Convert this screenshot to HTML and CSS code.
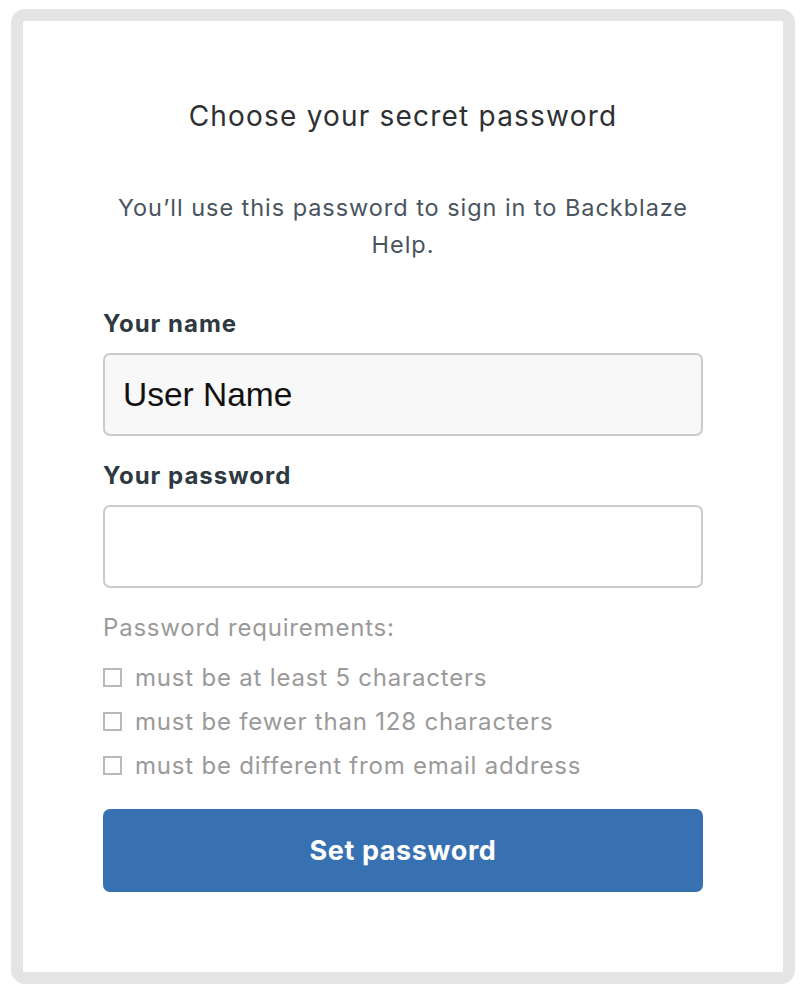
FILE: index.html
```html
<!DOCTYPE html>
<html lang="en">
<head>
  <meta charset="UTF-8" />
  <meta name="viewport" content="width=device-width, initial-scale=1.0" />
  <title>Choose your secret password</title>
  <link rel="stylesheet" href="styles.css">
</head>
<body>
  <div class="frame">
    <form class="card" onsubmit="return false">
      <h1>Choose your secret password</h1>
      <p class="intro">You’ll use this password to sign in to Backblaze Help.</p>

      <label class="field-label" for="name">Your name</label>
      <input class="field filled" id="name" type="text" value="User Name">

      <label class="field-label" for="password">Your password</label>
      <input class="field" id="password" type="password">

      <div class="reqs">
        <p class="reqs-title">Password requirements:</p>
        <ul>
          <li><span class="box"></span>must be at least 5 characters</li>
          <li><span class="box"></span>must be fewer than 128 characters</li>
          <li><span class="box"></span>must be different from email address</li>
        </ul>
      </div>

      <button type="submit">Set password</button>
    </form>
  </div>
</body>
</html>
```

FILE: styles.css
```css
html, body {
  margin: 0;
  padding: 0;
  background: #fff;
  font-family: Inter, 'Noto Sans', sans-serif;
}
.frame {
  margin: 9px 10px 0 11px;
  width: 760px;
  height: 951px;
  border: 12px solid #e4e4e4;
  border-radius: 14px;
  background: #fff;
}
.card {
  padding: 78px 80px 0;
  display: flex;
  flex-direction: column;
}
h1 {
  margin: 0;
  text-align: center;
  font-size: 28px;
  letter-spacing: 1.2px;
  font-weight: 400;
  color: #2f3033;
  line-height: 34px;
}
.intro {
  margin: 56px 0 0;
  text-align: center;
  font-size: 23.5px;
  letter-spacing: 0.95px;
  line-height: 37px;
  color: #49545e;
}
.field-label {
  margin-top: 25px;
  font-size: 24px;
  letter-spacing: 1px;
  font-weight: 700;
  color: #2f3941;
  line-height: 30px;
}
.intro + .field-label {
  margin-top: 46px;
}
.field {
  margin-top: 14px;
  height: 83px;
  box-sizing: border-box;
  border: 2px solid #cbcbcb;
  border-radius: 7px;
  background: #fff;
  padding: 0 18px;
  font-family: 'Liberation Sans', Arial, sans-serif;
  font-size: 33.5px;
  color: #111;
  outline: none;
}
.field.filled {
  background: #f8f8f8;
}
.reqs {
  margin-top: 25px;
  color: #9a9a9a;
  font-size: 24px;
  letter-spacing: 0.8px;
}
.reqs-title {
  margin: 0;
  line-height: 30px;
}
.reqs ul {
  list-style: none;
  margin: 12px 0 0;
  padding: 0;
}
.reqs li {
  display: flex;
  align-items: center;
  gap: 13px;
  height: 44px;
}
.box {
  width: 15px;
  height: 15px;
  border: 2px solid #b9b9b9;
  flex: none;
}
button {
  margin-top: 22px;
  height: 83px;
  border: none;
  border-radius: 7px;
  background: #3871b2;
  color: #fff;
  font-family: Inter, 'Noto Sans', sans-serif;
  font-size: 27px;
  letter-spacing: 0.6px;
  font-weight: 700;
  cursor: pointer;
}
```
